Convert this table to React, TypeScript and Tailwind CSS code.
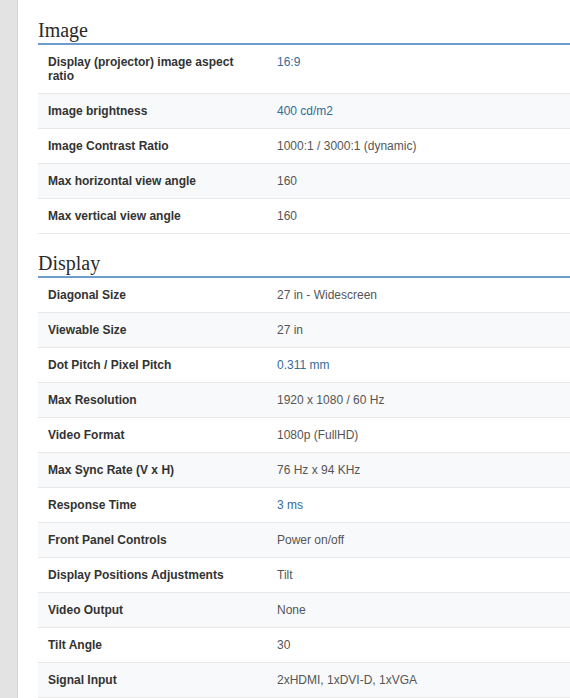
import React from 'react';

type Spec = { label: string; value: string; link?: boolean };

const imageSpecs: Spec[] = [
  { label: 'Display (projector) image aspect ratio', value: '16:9', link: true },
  { label: 'Image brightness', value: '400 cd/m2', link: true },
  { label: 'Image Contrast Ratio', value: '1000:1 / 3000:1 (dynamic)' },
  { label: 'Max horizontal view angle', value: '160' },
  { label: 'Max vertical view angle', value: '160' },
];

const displaySpecs: Spec[] = [
  { label: 'Diagonal Size', value: '27 in - Widescreen' },
  { label: 'Viewable Size', value: '27 in' },
  { label: 'Dot Pitch / Pixel Pitch', value: '0.311 mm', link: true },
  { label: 'Max Resolution', value: '1920 x 1080 / 60 Hz' },
  { label: 'Video Format', value: '1080p (FullHD)' },
  { label: 'Max Sync Rate (V x H)', value: '76 Hz x 94 KHz' },
  { label: 'Response Time', value: '3 ms', link: true },
  { label: 'Front Panel Controls', value: 'Power on/off' },
  { label: 'Display Positions Adjustments', value: 'Tilt' },
  { label: 'Video Output', value: 'None' },
  { label: 'Tilt Angle', value: '30' },
  { label: 'Signal Input', value: '2xHDMI, 1xDVI-D, 1xVGA' },
];

const SpecSection: React.FC<{ title: string; specs: Spec[]; top: string }> = ({ title, specs, top }) => (
  <section>
    <h2
      className={`${top} pb-[2px] border-b-2 border-[#6d9dcc] text-[20px] leading-[22px] text-[#2a2a2a] font-normal`}
      style={{ fontFamily: '"Liberation Serif", serif' }}
    >
      {title}
    </h2>
    <table className="w-full border-collapse text-[12px] leading-[14px]">
      <tbody>
        {specs.map((s, i) => (
          <tr key={s.label} className={`border-b border-[#e8e8e8] ${i % 2 === 1 ? 'bg-[#f8f9fa]' : 'bg-white'}`}>
            <td className="w-[229px] px-[10px] py-[10px] align-top font-bold text-[#333]">{s.label}</td>
            <td className={`px-[10px] py-[10px] align-top ${s.link ? 'text-[#336b99]' : 'text-[#555]'}`}>
              {s.value}
            </td>
          </tr>
        ))}
      </tbody>
    </table>
  </section>
);

export default function App() {
  return (
    <div className="flex h-[698px] w-[570px] overflow-hidden bg-white" style={{ fontFamily: '"Liberation Sans", Arial, sans-serif' }}>
      <div className="w-[18px] shrink-0 border-r border-[#d2d2d2] bg-[#e3e3e3]" />
      <main className="ml-[20px] flex-1">
        <SpecSection title="Image" specs={imageSpecs} top="pt-[19px]" />
        <SpecSection title="Display" specs={displaySpecs} top="pt-[18px]" />
      </main>
    </div>
  );
}
